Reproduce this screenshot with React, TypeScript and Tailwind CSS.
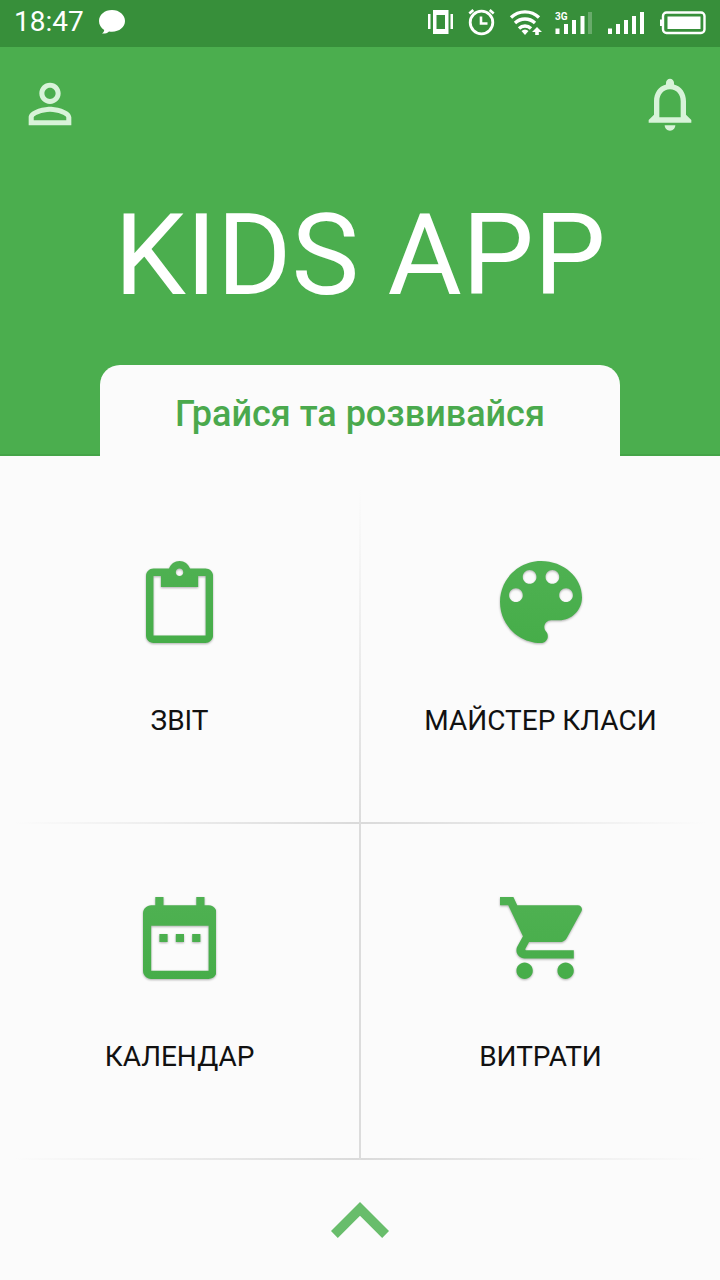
import type { ReactNode } from "react";

function StatusIcons() {
  return (
    <div className="flex items-center text-white" aria-hidden="true">
      <svg width="278" height="30" viewBox="0 0 278 30" fill="currentColor">
        {/* vibrate */}
        <path d="M0 7h2.500v15H0zM22.500 7H25v15h-2.500z" />
        <path fillRule="evenodd" d="M5 3h15.500v24H5zM8.500 8v14H17V8z" />
        {/* alarm */}
        <g fill="none" stroke="currentColor">
          <circle cx="53.500" cy="15.500" r="11.300" strokeWidth="2.800" />
          <path d="M53 9.500V16.500h6.500" strokeWidth="2.600" />
          <path d="M41.300 6.500l4-3.500M65.700 6.500l-4-3.500" strokeWidth="2.600" />
        </g>
        {/* wifi */}
        <g fill="none" stroke="currentColor" strokeWidth="3.300">
          <path d="M83 10.500a20 20 0 0 1 28 0" />
          <path d="M87 16a14.500 14.500 0 0 1 20 0" />
          <path d="M91 21.500a8.500 8.500 0 0 1 12 0" />
        </g>
        <path d="M93.500 24q3.500-3 7 0L97 28zM109 20l5 5h-3.200v3h-3.600v-3H104z" />
        {/* signal, first SIM */}
        <path d="M127.500 21.500h4V27h-4zM136 17h4v10h-4zM144 13h4v14h-4zM152.500 9h4v18h-4z" />
        <path opacity=".25" d="M160 5h4v22h-4z" />
        <text x="127" y="12.500" fontSize="10" fontWeight="700" className="font-[Roboto]">
          3G
        </text>
        {/* signal, second SIM */}
        <path d="M180 21.500h4V27h-4zM188 17h4v10h-4zM196 13h4v14h-4zM204 9h4v18h-4zM212 5h4v22h-4z" />
        {/* battery */}
        <rect x="235" y="5.500" width="41.500" height="20.500" rx="3.500" fill="none" stroke="currentColor" strokeWidth="2.400" />
        <path d="M239.500 9.500h33V22h-33zM232 12.500h3v6.500h-3z" />
      </svg>
    </div>
  );
}

function StatusBar() {
  return (
    <div className="flex h-[47px] items-center justify-between bg-[#378f3a] pr-[14px] pl-[14px] pb-[3px]">
      <div className="flex items-center gap-[14px]">
        <time className="text-[28px] leading-8 text-white">18:47</time>
        <svg width="28" height="26" viewBox="0 0 28 26" fill="#fff" aria-hidden="true">
          <path d="M14 1C6.600 1 1 5.900 1 12c0 3.800 1.900 6.900 5.200 8.900-.1 1.500-.8 2.500-2.200 3.600 2.800.3 5.200-.4 7-2.100 1 .2 2 .3 3 .3 7.400 0 13-4.700 13-10.700S21.400 1 14 1z" />
        </svg>
      </div>
      <StatusIcons />
    </div>
  );
}

function Tile({ label, icon }: { label: string; icon: ReactNode }) {
  return (
    <a href="#" className="flex h-[336px] flex-col items-center pt-[73px]">
      {icon}
      <span className="mt-[62px] text-[28px] leading-8 text-[#111]">{label}</span>
    </a>
  );
}

const ICON = "h-[82px] w-auto fill-[url(#leaf)] drop-shadow-[0_1px_1px_rgba(0,0,0,0.3)]";

const clipboard = (
  <svg viewBox="3 0 18 22" className={ICON} aria-hidden="true">
    <path d="M19 2h-4.180C14.400.84 13.300 0 12 0c-1.300 0-2.400.84-2.820 2H5c-1.100 0-2 .9-2 2v16c0 1.100.9 2 2 2h14c1.100 0 2-.9 2-2V4c0-1.100-.9-2-2-2zm-7 0c.55 0 1 .45 1 1s-.45 1-1 1-1-.45-1-1 .45-1 1-1zm7 18H5V4h2v3h10V4h2v16z" />
  </svg>
);

const palette = (
  <svg viewBox="3 3 18 18" className={ICON} aria-hidden="true">
    <path d="M12 3c-4.970 0-9 4.030-9 9s4.030 9 9 9c.83 0 1.500-.67 1.500-1.500 0-.39-.15-.74-.39-1.010-.23-.26-.38-.61-.38-.99 0-.83.67-1.500 1.500-1.500H16c2.760 0 5-2.240 5-5 0-4.420-4.030-8-9-8zm-5.500 9c-.83 0-1.500-.67-1.500-1.500S5.670 9 6.500 9 8 9.670 8 10.500 7.330 12 6.500 12zm3-4C8.670 8 8 7.330 8 6.500S8.670 5 9.500 5s1.500.67 1.500 1.500S10.330 8 9.500 8zm5 0c-.83 0-1.500-.67-1.500-1.500S13.670 5 14.500 5s1.500.67 1.500 1.500S15.330 8 14.500 8zm3 4c-.83 0-1.500-.67-1.500-1.500S16.670 9 17.500 9s1.500.67 1.500 1.500-.67 1.500-1.500 1.500z" />
  </svg>
);

const calendar = (
  <svg viewBox="3 2 18 20" className={ICON} aria-hidden="true">
    <path d="M9 11H7v2h2v-2zm4 0h-2v2h2v-2zm4 0h-2v2h2v-2zm2-7h-1V2h-2v2H8V2H6v2H5c-1.110 0-2 .9-2 2v14c0 1.100.89 2 2 2h14c1.100 0 2-.9 2-2V6c0-1.100-.9-2-2-2zm0 16H5V9h14v11z" />
  </svg>
);

const cart = (
  <svg viewBox="1 2 20 20" className={ICON} aria-hidden="true">
    <path d="M7 18c-1.100 0-1.990.9-1.990 2S5.900 22 7 22s2-.9 2-2-.9-2-2-2zM1 2v2h2l3.600 7.590-1.350 2.450c-.16.28-.25.61-.25.96 0 1.100.9 2 2 2h12v-2H7.420c-.14 0-.25-.11-.25-.25l.03-.12.900-1.630h7.450c.75 0 1.410-.41 1.750-1.030l3.580-6.490c.08-.14.12-.31.12-.48 0-.55-.45-1-1-1H5.210l-.94-2H1zm16 16c-1.100 0-1.990.9-1.990 2s.89 2 1.990 2 2-.9 2-2-.9-2-2-2z" />
  </svg>
);

function Divider() {
  return (
    <div className="-mt-[2px] h-[2px] bg-linear-to-r from-transparent from-2% via-[#dadada] via-50% to-transparent to-98%" />
  );
}

export default function App() {
  return (
    <div className="flex min-h-screen flex-col bg-[#fbfbfb] font-[Roboto,'Noto_Sans',sans-serif]">
      <svg width="0" height="0" className="absolute" aria-hidden="true">
        <defs>
          <linearGradient id="leaf" x1="0" y1="0" x2="0" y2="1">
            <stop offset="0" stopColor="#4fb152" />
            <stop offset="1" stopColor="#46ad49" />
          </linearGradient>
        </defs>
      </svg>
      <StatusBar />
      <header className="flex flex-col border-b-2 border-[#45a448] bg-[#4bae4e]">
        <div className="flex justify-between px-[18px] pt-[25px]">
          <button type="button" aria-label="Профіль" className="text-[#d8f3d9]">
            <svg width="64" height="64" viewBox="0 0 24 24" fill="currentColor">
              <path d="M12 5.900c1.160 0 2.100.94 2.100 2.100s-.94 2.100-2.100 2.100S9.900 9.160 9.900 8s.94-2.100 2.100-2.100m0 9c2.970 0 6.100 1.460 6.100 2.100v1.100H5.900V17c0-.64 3.130-2.100 6.100-2.100M12 4C9.790 4 8 5.790 8 8s1.790 4 4 4 4-1.790 4-4-1.790-4-4-4zm0 9c-2.670 0-8 1.340-8 4v3h16v-3c0-2.660-5.330-4-8-4z" />
            </svg>
          </button>
          <button type="button" aria-label="Сповіщення" className="text-[#d8f3d9]">
            <svg width="64" height="64" viewBox="0 0 24 24" fill="currentColor">
              <path d="M12 22c1.100 0 2-.9 2-2h-4c0 1.100.89 2 2 2zm6-6v-5c0-3.070-1.640-5.640-4.500-6.320V4c0-.83-.67-1.500-1.500-1.500s-1.500.67-1.500 1.500v.68C7.630 5.360 6 7.920 6 11v5l-2 2v1h16v-1l-2-2zm-2 1H8v-6c0-2.480 1.510-4.500 4-4.500s4 2.020 4 4.500v6z" />
            </svg>
          </button>
        </div>
        <h1 className="mt-[53px] text-center text-[114px] leading-[132px] text-white">KIDS APP</h1>
        <div className="mx-[100px] mt-[44px] -mb-[2px] h-[91px] rounded-t-[20px] bg-[#fbfbfb] pt-[28px]">
          <p className="text-center text-[36px] leading-[42px] font-medium text-[#4aa94d]">
            Грайся та розвивайся
          </p>
        </div>
      </header>
      <main className="relative pt-8">
        <nav>
          <div className="grid grid-cols-2 gap-x-[2px]">
            <Tile label="ЗВІТ" icon={clipboard} />
            <Tile label="МАЙСТЕР КЛАСИ" icon={palette} />
          </div>
          <Divider />
          <div className="grid grid-cols-2 gap-x-[2px]">
            <Tile label="КАЛЕНДАР" icon={calendar} />
            <Tile label="ВИТРАТИ" icon={cart} />
          </div>
          <Divider />
        </nav>
        <div className="pointer-events-none absolute top-8 bottom-0 left-1/2 w-[2px] -translate-x-1/2 bg-linear-to-b from-transparent via-[#dcdcdc] via-50% to-[#dcdcdc]" />
      </main>
      <button type="button" aria-label="Розгорнути" className="flex grow items-start justify-center pt-[42px]">
        <svg width="58" height="36" viewBox="6 8 12 7.410" fill="#68bd6b">
          <path d="M12 8l-6 6 1.410 1.410L12 10.830l4.590 4.580L18 14z" />
        </svg>
      </button>
    </div>
  );
}
